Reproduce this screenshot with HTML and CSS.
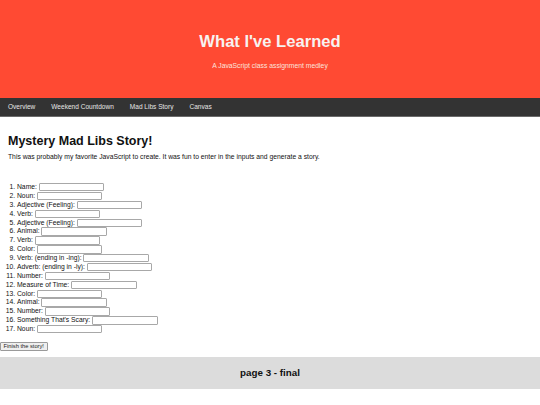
FILE: index.html
```html
<!DOCTYPE html>
<html lang="en">
<head>
<meta charset="utf-8">
<title>What I've Learned</title>
<link rel="stylesheet" href="styles.css">
</head>
<body>
<header class="site-header">
  <h1 class="site-title">What I've Learned</h1>
  <p class="site-subtitle">A JavaScript class assignment medley</p>
</header>
<nav class="site-nav">
  <a class="nav-link" href="#">Overview</a>
  <a class="nav-link" href="#">Weekend Countdown</a>
  <a class="nav-link" href="#">Mad Libs Story</a>
  <a class="nav-link" href="#">Canvas</a>
</nav>
<main class="content">
  <section class="intro">
    <h2 class="section-title">Mystery Mad Libs Story!</h2>
    <p class="section-text">This was probably my favorite JavaScript to create. It was fun to enter in the inputs and generate a story.</p>
  </section>
  <form class="madlibs">
    <ol class="word-list">
      <li>Name: <input class="word-input" type="text"></li>
      <li>Noun: <input class="word-input" type="text"></li>
      <li>Adjective (Feeling): <input class="word-input" type="text"></li>
      <li>Verb: <input class="word-input" type="text"></li>
      <li>Adjective (Feeling): <input class="word-input" type="text"></li>
      <li>Animal: <input class="word-input" type="text"></li>
      <li>Verb: <input class="word-input" type="text"></li>
      <li>Color: <input class="word-input" type="text"></li>
      <li>Verb: (ending in -ing): <input class="word-input" type="text"></li>
      <li>Adverb: (ending in -ly): <input class="word-input" type="text"></li>
      <li>Number: <input class="word-input" type="text"></li>
      <li>Measure of Time: <input class="word-input" type="text"></li>
      <li>Color: <input class="word-input" type="text"></li>
      <li>Animal: <input class="word-input" type="text"></li>
      <li>Number: <input class="word-input" type="text"></li>
      <li>Something That's Scary: <input class="word-input" type="text"></li>
      <li>Noun: <input class="word-input" type="text"></li>
    </ol>
    <button class="finish-btn" type="button">Finish the story!</button>
  </form>
</main>
<footer class="site-footer">page 3 - final</footer>
</body>
</html>
```
FILE: styles.css
```css
html, body {
  margin: 0;
  padding: 0;
  background: #ffffff;
}
body {
  font-family: "Liberation Sans", Arial, sans-serif;
  font-size: 6.75px;
  color: #111111;
}
.site-header {
  background: #ff4a33;
  height: 98px;
  box-sizing: border-box;
  padding-top: 32px;
  text-align: center;
}
.site-title {
  margin: 0;
  font-size: 16.6px;
  line-height: 20px;
  font-weight: bold;
  color: #f7f2f0;
}
.site-subtitle {
  margin: 9px 0 0;
  font-size: 6.8px;
  line-height: 9px;
  color: #fbe3dd;
}
.site-nav {
  display: flex;
  background: #333333;
  height: 18px;
  border-bottom: 1px solid #6a6a6a;
  align-items: center;
}
.nav-link {
  color: #e6e6e6;
  text-decoration: none;
  padding: 0 8px;
  line-height: 18px;
  font-size: 6.55px;
}
.content {
  padding: 0;
}
.intro {
  padding: 0 8px;
}
.section-title {
  margin: 16.7px 0 0;
  font-size: 12.5px;
  line-height: 15px;
  font-weight: bold;
  color: #111111;
}
.section-text {
  margin: 3.2px 0 0;
  line-height: 9px;
}
.madlibs {
  margin: 22.2px 0 0;
}
.word-list {
  margin: 0;
  padding-left: 17px;
}
.word-list li {
  height: 8.875px;
  line-height: 8.875px;
}
.word-input {
  box-sizing: border-box;
  width: 65.5px;
  height: 8.4px;
  padding: 0;
  margin: 0;
  border: 1px solid #a8a8a8;
  border-radius: 1px;
  vertical-align: middle;
  font-size: 5.7px;
  background: #ffffff;
}
.finish-btn {
  display: block;
  margin: 8.1px 0 0;
  box-sizing: border-box;
  height: 8.6px;
  padding: 0 2.6px;
  font-family: "Liberation Sans", Arial, sans-serif;
  font-size: 5.73px;
  line-height: 6px;
  color: #222222;
  background: #efefef;
  border: 1px solid #9a9a9a;
  border-radius: 1px;
}
.site-footer {
  margin-top: 6.5px;
  height: 32px;
  background: #dcdcdc;
  text-align: center;
  line-height: 32px;
  font-size: 9.8px;
  font-weight: bold;
  color: #111111;
}
```
